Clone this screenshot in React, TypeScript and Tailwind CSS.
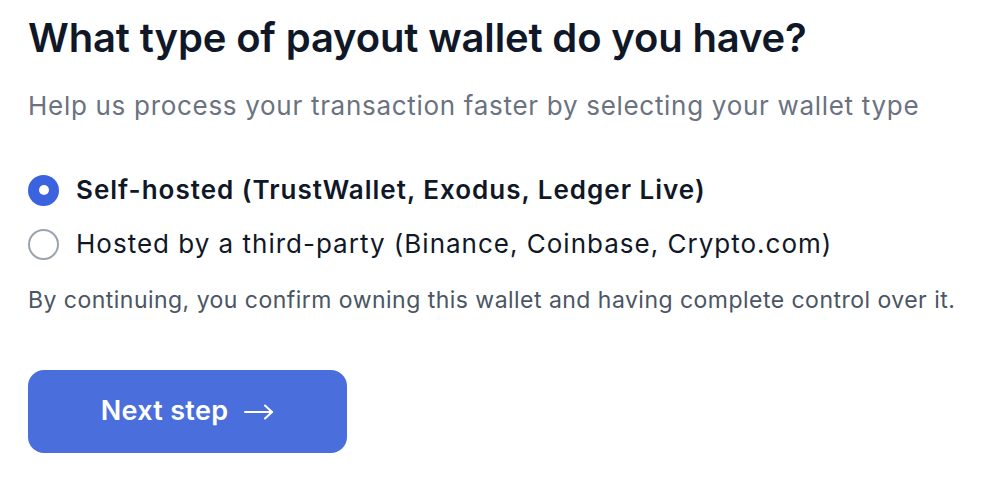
import React, { useState } from "react";

export default function App() {
  const [sel, setSel] = useState(0);
  const options = [
    "Self-hosted (TrustWallet, Exodus, Ledger Live)",
    "Hosted by a third-party (Binance, Coinbase, Crypto.com)",
  ];
  return (
    <div
      className="w-[1004px] h-[492px] bg-white pl-[28px] pt-[14px]"
      style={{ fontFamily: "Inter, 'Noto Sans', sans-serif" }}
    >
      <h1 className="text-[40px] leading-[48px] font-semibold text-[#101828] tracking-[-0.15px]">
        What type of payout wallet do you have?
      </h1>
      <p className="mt-[28px] text-[26px] leading-[32px] text-[#6b7280] tracking-[0.7px]">
        Help us process your transaction faster by selecting your wallet type
      </p>
      <div className="mt-[52px] flex flex-col gap-[22px]">
        {options.map((o, i) => (
          <label key={i} className="flex items-center h-[32px] gap-[17px] cursor-pointer" onClick={() => setSel(i)}>
            {sel === i ? (
              <span className="w-[31px] h-[31px] shrink-0 rounded-full bg-[#3b63e0] flex items-center justify-center">
                <span className="w-[10px] h-[10px] rounded-full bg-white" />
              </span>
            ) : (
              <span className="w-[31px] h-[31px] shrink-0 rounded-full border-2 border-[#9ca3af] bg-white" />
            )}
            <span
              className={
                "text-[26px] leading-[32px] text-[#101828] tracking-[1px] " +
                (sel === i ? "font-semibold" : "font-normal")
              }
            >
              {o}
            </span>
          </label>
        ))}
      </div>
      <p className="mt-[26px] text-[23px] leading-[28px] text-[#4b5563] tracking-[0.47px]">
        By continuing, you confirm owning this wallet and having complete control over it.
      </p>
      <button className="mt-[56px] w-[319px] h-[83px] rounded-[16px] bg-[#4a6fdc] text-white flex items-center justify-center gap-[16px]">
        <span className="text-[27px] font-semibold tracking-[0.3px]">Next step</span>
        <svg width="30" height="16" viewBox="0 0 30 16" fill="none" stroke="white" strokeWidth="2" strokeLinecap="round" strokeLinejoin="round">
          <path d="M1 8H28" />
          <path d="M21 1.5L28 8L21 14.5" />
        </svg>
      </button>
    </div>
  );
}
